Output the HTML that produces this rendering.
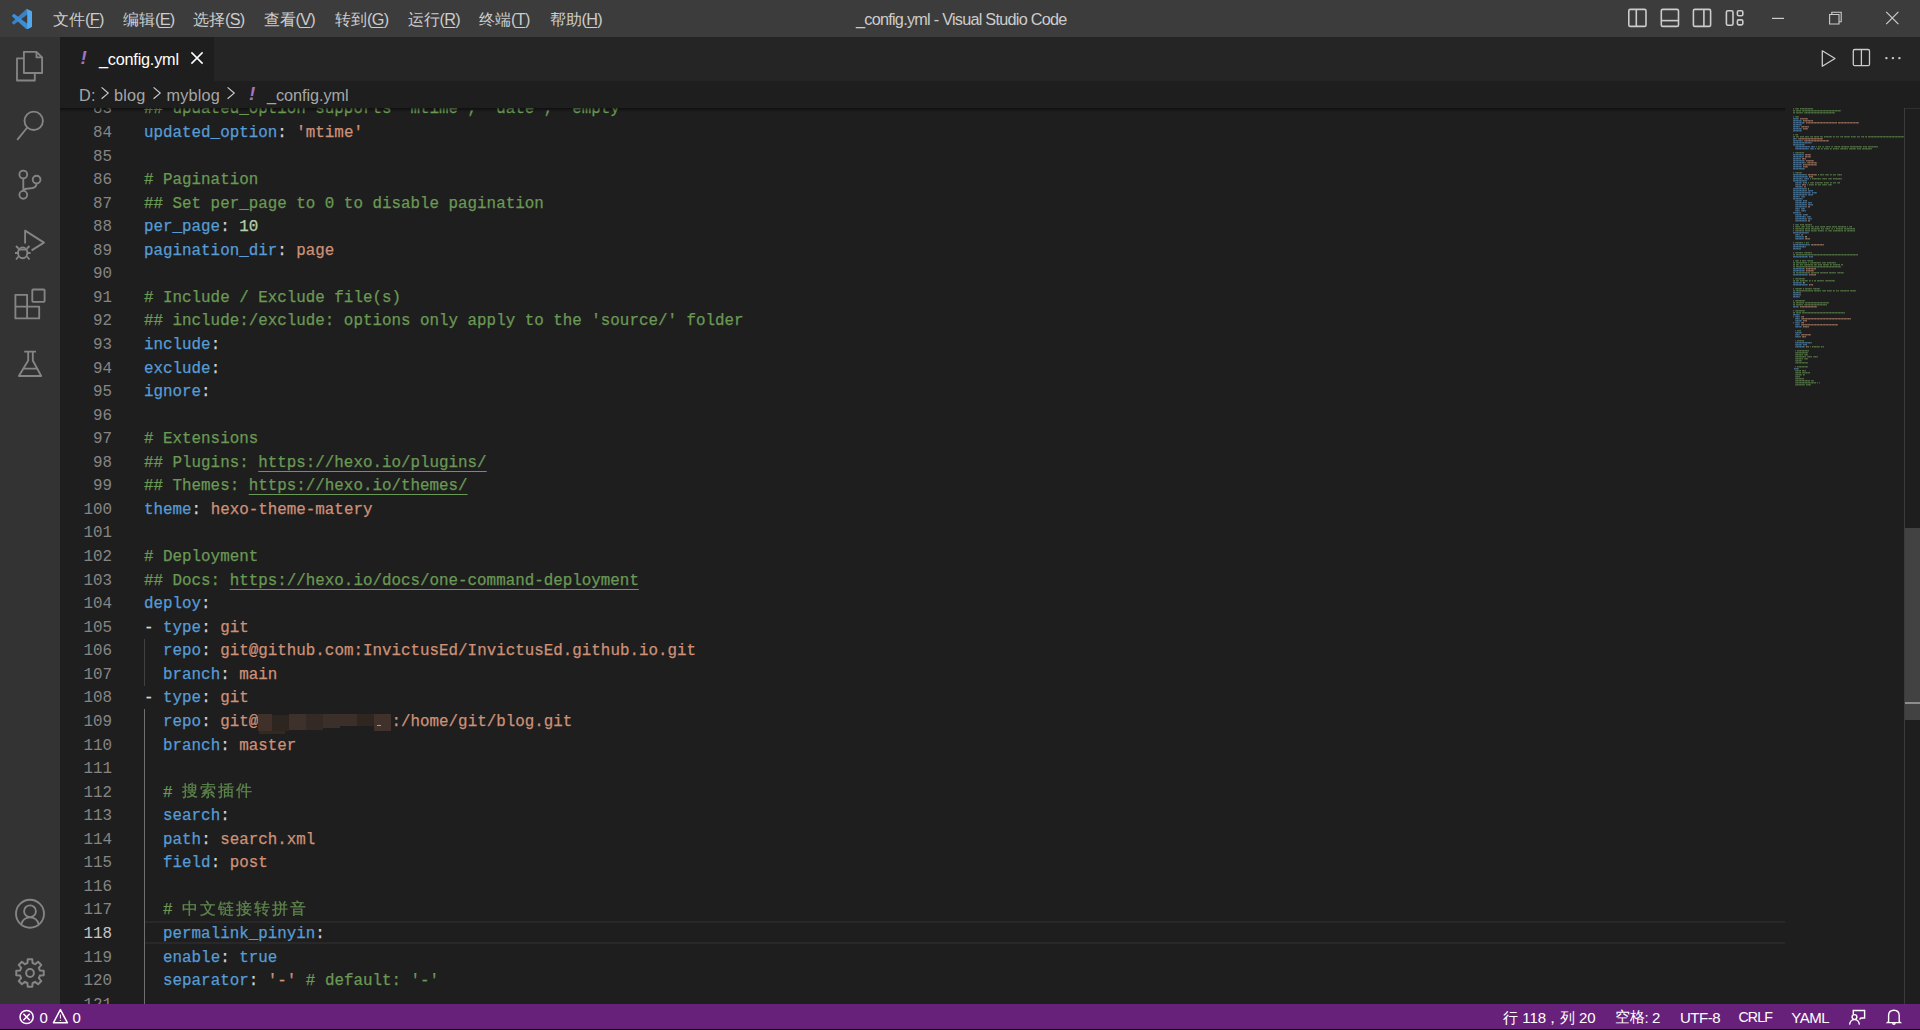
<!DOCTYPE html>
<html><head><meta charset="utf-8"><title>_config.yml - Visual Studio Code</title>
<style>
*{box-sizing:border-box}
html,body{margin:0;padding:0;width:1920px;height:1030px;overflow:hidden;background:#000}
body{position:relative;font-family:"Liberation Sans",sans-serif}
.abs{position:absolute}
#titlebar{position:absolute;left:0;top:0;width:1920px;height:37px;background:#3c3c3c}
.menu{position:absolute;top:8px;height:22px;line-height:22px;font-size:16.25px;color:#cccccc;white-space:nowrap}
#title{position:absolute;top:8px;left:856px;height:22px;line-height:22px;font-size:16.25px;color:#cccccc;white-space:nowrap;letter-spacing:-0.75px}
#activity{position:absolute;left:0;top:37px;width:60px;height:967px;background:#333333}
#tabs{position:absolute;left:60px;top:37px;width:1860px;height:44px;background:#252526}
#tab{position:absolute;left:60px;top:37px;width:154px;height:44px;background:#1e1e1e}
#crumbs{position:absolute;left:60px;top:81px;width:1860px;height:27px;background:#1e1e1e}
#editor{position:absolute;left:60px;top:108px;width:1860px;height:896px;background:#1e1e1e;overflow:hidden}
#status{position:absolute;left:0;top:1004px;width:1920px;height:25px;background:#68217a;color:#fff}
.ln{position:absolute;left:0;width:52px;text-align:right;font-family:"Liberation Mono",monospace;font-size:15.865px;line-height:23.56px;height:23.56px;color:#858585;white-space:pre}
.ln.act{color:#c6c6c6}
.cl{position:absolute;left:84px;font-family:"Liberation Mono",monospace;font-size:15.865px;line-height:23.56px;height:23.56px;white-space:pre;-webkit-text-stroke:0.25px currentColor}
.u{text-decoration:underline;text-underline-offset:4px;text-decoration-thickness:1px;text-decoration-skip-ink:none}
.cjk{font-size:15.5px;letter-spacing:2px;font-weight:200;opacity:0.85;position:relative;top:-0.5px}
.st{position:absolute;top:1005px;height:25px;line-height:25px;font-size:15px;color:#fff;white-space:nowrap}
</style></head><body>

<div id="titlebar"></div>

<svg style="position:absolute;left:11.8px;top:8.8px" width="20.3" height="20.3" viewBox="0 0 100 100">
  <path fill="#3a82c2" d="M96.46 10.8 75.86.87C73.48-.28 70.62.2 68.75 2.07L1.3 63.57c-1.81 1.65-1.81 4.5.01 6.15l5.51 5.01c1.49 1.35 3.72 1.45 5.32.23L93.4 13.36c2.72-2.07 6.64-.13 6.64 3.3v-.24c0-2.41-1.38-4.6-3.55-5.62z"/>
  <path fill="#3b8ed6" d="m96.46 89.2-20.6 9.93c-2.38 1.15-5.24.66-7.11-1.21L1.3 36.43c-1.81-1.65-1.81-4.5.01-6.15l5.51-5.01c1.49-1.35 3.72-1.45 5.32-.23L93.4 86.64c2.72 2.07 6.64.13 6.64-3.3v.24c0 2.41-1.38 4.6-3.55 5.62z"/>
  <path fill="#52a8ee" d="M75.86 99.13c-2.38 1.15-5.24.66-7.11-1.21 2.31 2.31 6.25.67 6.25-2.59V4.67c0-3.26-3.94-4.9-6.25-2.59 1.87-1.87 4.73-2.36 7.11-1.21l20.6 9.92c2.17 1.04 3.55 3.24 3.55 5.65v67.12c0 2.41-1.38 4.6-3.55 5.65z"/>
</svg>
<div class="menu" style="left:53px"><span style="font-weight:300">文件</span><span style="letter-spacing:-0.7px">(<span style="text-decoration:underline;text-underline-offset:2px;text-decoration-thickness:1px">F</span>)</span></div>
<div class="menu" style="left:123px"><span style="font-weight:300">编辑</span><span style="letter-spacing:-0.7px">(<span style="text-decoration:underline;text-underline-offset:2px;text-decoration-thickness:1px">E</span>)</span></div>
<div class="menu" style="left:193px"><span style="font-weight:300">选择</span><span style="letter-spacing:-0.7px">(<span style="text-decoration:underline;text-underline-offset:2px;text-decoration-thickness:1px">S</span>)</span></div>
<div class="menu" style="left:263.5px"><span style="font-weight:300">查看</span><span style="letter-spacing:-0.7px">(<span style="text-decoration:underline;text-underline-offset:2px;text-decoration-thickness:1px">V</span>)</span></div>
<div class="menu" style="left:335px"><span style="font-weight:300">转到</span><span style="letter-spacing:-0.7px">(<span style="text-decoration:underline;text-underline-offset:2px;text-decoration-thickness:1px">G</span>)</span></div>
<div class="menu" style="left:407.5px"><span style="font-weight:300">运行</span><span style="letter-spacing:-0.7px">(<span style="text-decoration:underline;text-underline-offset:2px;text-decoration-thickness:1px">R</span>)</span></div>
<div class="menu" style="left:479px"><span style="font-weight:300">终端</span><span style="letter-spacing:-0.7px">(<span style="text-decoration:underline;text-underline-offset:2px;text-decoration-thickness:1px">T</span>)</span></div>
<div class="menu" style="left:549.5px"><span style="font-weight:300">帮助</span><span style="letter-spacing:-0.7px">(<span style="text-decoration:underline;text-underline-offset:2px;text-decoration-thickness:1px">H</span>)</span></div>
<div id="title">_config.yml - Visual Studio Code</div>

<svg style="position:absolute;left:0;top:0" width="1920" height="37" fill="none" stroke="#cccccc" stroke-width="1.6">
  <rect x="1628.8" y="9.4" width="17.2" height="17" rx="1.5"/>
  <path d="M1636.3 9.4 V26.4"/>
  <rect x="1661.3" y="9.4" width="17.2" height="17" rx="1.5"/>
  <path d="M1661.3 20.6 H1678.5"/>
  <rect x="1693.4" y="9.4" width="17.2" height="17" rx="1.5"/>
  <path d="M1703.9 9.4 V26.4"/>
  <rect x="1726.4" y="10.7" width="6.6" height="14.5" rx="1.5"/>
  <rect x="1737.4" y="10.8" width="5.4" height="5" rx="1.3"/>
  <rect x="1737.4" y="19.9" width="5.4" height="5" rx="1.3"/>
  <path d="M1772 18.4 H1784" stroke-width="1.2"/>
  <path d="M1829.6 14.5 H1839 V24 H1829.6 Z M1831.8 14.5 V12.3 H1841.2 V21.8 H1839" stroke-width="1.1"/>
  <path d="M1886.2 11.8 L1898.4 24.2 M1898.4 11.8 L1886.2 24.2" stroke-width="1.2"/>
</svg>
<div id="activity"></div>

<svg style="position:absolute;left:0;top:37px" width="60" height="967" fill="none" stroke="#858585" stroke-width="1.85" stroke-linejoin="round">
  <!-- explorer -->
  <path d="M23.9 51.8 H36.5 L42.1 57.4 V73 H23.9 Z M36.5 51.8 V57.4 H42.1" transform="translate(0,-37)"/>
  <path d="M23.9 58.4 H17 V80.5 H34.8 V73" transform="translate(0,-37)"/>
  <!-- search -->
  <circle cx="33.7" cy="83.8" r="9.2"/>
  <path d="M27.3 90.5 L17.2 102.8"/>
  <!-- scm -->
  <circle cx="23.3" cy="137.5" r="3.9"/>
  <circle cx="36.6" cy="142.6" r="3.9"/>
  <circle cx="23.3" cy="157.8" r="3.9"/>
  <path d="M23.3 141.4 V153.9 M36.6 146.5 C36.6 150.5 34 151.5 29 151.5 C25 151.5 23.3 153 23.3 153.9"/>
  <!-- run debug -->
  <path d="M25.1 206.5 V193.6 L44 205.6 L31.6 213.4"/>
  <ellipse cx="22.7" cy="215.8" rx="4.6" ry="5.4"/>
  <path d="M18 212.5 H27.4 M16 209 L18.5 211.5 M29.5 209 L27 211.5 M15 216 H18 M27.4 216 H30.5 M16 222.5 L18.5 219.5 M29.5 222.5 L27 219.5"/>
  <!-- extensions -->
  <path d="M15.4 257.8 H27.1 V281.4 H15.4 Z M15.4 269.6 H39.2 V281.4 H27.1"/>
  <rect x="32.3" y="252.5" width="12.3" height="12.3" rx="0.8"/>
  <!-- testing beaker -->
  <path d="M24.2 314.6 H36 M28.2 314.6 V323.5 L18.9 339 H41.2 L32.8 323.5 V314.6 M22.5 331.6 H37.6"/>
  <!-- account -->
  <circle cx="30" cy="876.7" r="14"/>
  <circle cx="30" cy="874.2" r="5.9"/>
  <path d="M21.4 887.2 C22.6 882.4 26 880.4 30 880.4 C34 880.4 37.4 882.4 38.6 887.2"/>
</svg>
<svg style="position:absolute;left:15px;top:957.5px" width="30" height="30" viewBox="0 0 30 30" fill="none" stroke="#858585" stroke-width="2" stroke-linejoin="round">
  <path d="M12.39 5.14 L12.72 1.29 L17.28 1.29 L17.61 5.14 A10.2 10.2 0 0 1 20.12 6.18 L20.12 6.18 L23.08 3.69 L26.31 6.92 L23.82 9.88 A10.2 10.2 0 0 1 24.86 12.39 L24.86 12.39 L28.71 12.72 L28.71 17.28 L24.86 17.61 A10.2 10.2 0 0 1 23.82 20.12 L23.82 20.12 L26.31 23.08 L23.08 26.31 L20.12 23.82 A10.2 10.2 0 0 1 17.61 24.86 L17.61 24.86 L17.28 28.71 L12.72 28.71 L12.39 24.86 A10.2 10.2 0 0 1 9.88 23.82 L9.88 23.82 L6.92 26.31 L3.69 23.08 L6.18 20.12 A10.2 10.2 0 0 1 5.14 17.61 L5.14 17.61 L1.29 17.28 L1.29 12.72 L5.14 12.39 A10.2 10.2 0 0 1 6.18 9.88 L6.18 9.88 L3.69 6.92 L6.92 3.69 L9.88 6.18 A10.2 10.2 0 0 1 12.39 5.14 Z"/>
  <circle cx="15" cy="15" r="3.9"/>
</svg>

<div id="tabs"></div><div id="tab"></div>
<div class="abs" style="left:80.5px;top:47.5px;font:italic bold 19px 'Liberation Sans';color:#a074c4;line-height:20px">!</div>
<div class="abs" style="left:99px;top:47.5px;font-size:16.25px;color:#ffffff;line-height:22px;white-space:nowrap;letter-spacing:-0.22px">_config.yml</div>
<svg class="abs" style="left:190px;top:51px" width="14" height="14"><path d="M1.4 1.4 L12.6 12.6 M12.6 1.4 L1.4 12.6" stroke="#ffffff" stroke-width="1.5"/></svg>
<svg class="abs" style="left:0;top:37px" width="1920" height="44" fill="none" stroke="#cccccc" stroke-width="1.3">
 <path d="M1822.3 13.8 L1835 21.5 L1822.3 29.2 Z" stroke-linejoin="round"/>
 <rect x="1853.3" y="12.5" width="16.2" height="16.2" rx="1.5"/>
 <path d="M1861.4 12.5 V28.7"/>
 <circle cx="1886.4" cy="21.1" r="1.2" fill="#cccccc" stroke="none"/>
 <circle cx="1892.9" cy="21.1" r="1.2" fill="#cccccc" stroke="none"/>
 <circle cx="1899.4" cy="21.1" r="1.2" fill="#cccccc" stroke="none"/>
</svg>
<div id="crumbs"></div>
<div class="abs" style="left:79px;top:84px;color:rgba(204,204,204,0.8);font-size:16.25px;line-height:22px;white-space:nowrap;letter-spacing:0.2px">D:</div>
<div class="abs" style="left:114px;top:84px;color:rgba(204,204,204,0.8);font-size:16.25px;line-height:22px;white-space:nowrap;letter-spacing:0.2px">blog</div>
<div class="abs" style="left:166.5px;top:84px;color:rgba(204,204,204,0.8);font-size:16.25px;line-height:22px;white-space:nowrap;letter-spacing:0.2px">myblog</div>
<div class="abs" style="left:249px;top:84px;font:italic bold 19px 'Liberation Sans';color:#a074c4;line-height:20px">!</div>
<div class="abs" style="left:267px;top:84px;color:rgba(204,204,204,0.8);font-size:16.25px;line-height:22px;white-space:nowrap;letter-spacing:0.2px;letter-spacing:-0.05px">_config.yml</div>
<svg class="abs" style="left:0;top:0" width="400" height="110" fill="none" stroke="#cccccc" stroke-width="1.2"><path d="M101.6 87.4 L108.2 93.1 L101.6 98.8" /><path d="M153.6 87.4 L160.2 93.1 L153.6 98.8" /><path d="M227.6 87.4 L234.2 93.1 L227.6 98.8" /></svg>
<div id="editor">
<div class="abs" style="left:84px;top:813px;width:1641px;height:23px;border-top:2px solid #282828;border-bottom:2px solid #282828"></div>
<div class="abs" style="left:84px;top:530.78px;width:1px;height:47.12px;background:#404040"></div>
<div class="abs" style="left:84px;top:601.46px;width:1px;height:294.54px;background:#707070"></div>
<div class="ln" style="top:-9.60px">83</div>
<div class="cl" style="top:-9.60px"><span style="color:#6a9955">## updated_option supports &#x27;mtime&#x27;, &#x27;date&#x27;, &#x27;empty&#x27;</span></div>
<div class="ln" style="top:13.96px">84</div>
<div class="cl" style="top:13.96px"><span style="color:#569cd6">updated_option</span><span style="color:#d4d4d4">: </span><span style="color:#ce9178">&#x27;mtime&#x27;</span></div>
<div class="ln" style="top:37.52px">85</div>
<div class="cl" style="top:37.52px"></div>
<div class="ln" style="top:61.08px">86</div>
<div class="cl" style="top:61.08px"><span style="color:#6a9955"># Pagination</span></div>
<div class="ln" style="top:84.64px">87</div>
<div class="cl" style="top:84.64px"><span style="color:#6a9955">## Set per_page to 0 to disable pagination</span></div>
<div class="ln" style="top:108.20px">88</div>
<div class="cl" style="top:108.20px"><span style="color:#569cd6">per_page</span><span style="color:#d4d4d4">: </span><span style="color:#b5cea8">10</span></div>
<div class="ln" style="top:131.76px">89</div>
<div class="cl" style="top:131.76px"><span style="color:#569cd6">pagination_dir</span><span style="color:#d4d4d4">: </span><span style="color:#ce9178">page</span></div>
<div class="ln" style="top:155.32px">90</div>
<div class="cl" style="top:155.32px"></div>
<div class="ln" style="top:178.88px">91</div>
<div class="cl" style="top:178.88px"><span style="color:#6a9955"># Include / Exclude file(s)</span></div>
<div class="ln" style="top:202.44px">92</div>
<div class="cl" style="top:202.44px"><span style="color:#6a9955">## include:/exclude: options only apply to the &#x27;source/&#x27; folder</span></div>
<div class="ln" style="top:226.00px">93</div>
<div class="cl" style="top:226.00px"><span style="color:#569cd6">include</span><span style="color:#d4d4d4">:</span></div>
<div class="ln" style="top:249.56px">94</div>
<div class="cl" style="top:249.56px"><span style="color:#569cd6">exclude</span><span style="color:#d4d4d4">:</span></div>
<div class="ln" style="top:273.12px">95</div>
<div class="cl" style="top:273.12px"><span style="color:#569cd6">ignore</span><span style="color:#d4d4d4">:</span></div>
<div class="ln" style="top:296.68px">96</div>
<div class="cl" style="top:296.68px"></div>
<div class="ln" style="top:320.24px">97</div>
<div class="cl" style="top:320.24px"><span style="color:#6a9955"># Extensions</span></div>
<div class="ln" style="top:343.80px">98</div>
<div class="cl" style="top:343.80px"><span style="color:#6a9955">## Plugins: </span><span style="color:#6a9955" class="u">https://hexo.io/plugins/</span></div>
<div class="ln" style="top:367.36px">99</div>
<div class="cl" style="top:367.36px"><span style="color:#6a9955">## Themes: </span><span style="color:#6a9955" class="u">https://hexo.io/themes/</span></div>
<div class="ln" style="top:390.92px">100</div>
<div class="cl" style="top:390.92px"><span style="color:#569cd6">theme</span><span style="color:#d4d4d4">: </span><span style="color:#ce9178">hexo-theme-matery</span></div>
<div class="ln" style="top:414.48px">101</div>
<div class="cl" style="top:414.48px"></div>
<div class="ln" style="top:438.04px">102</div>
<div class="cl" style="top:438.04px"><span style="color:#6a9955"># Deployment</span></div>
<div class="ln" style="top:461.60px">103</div>
<div class="cl" style="top:461.60px"><span style="color:#6a9955">## Docs: </span><span style="color:#6a9955" class="u">https://hexo.io/docs/one-command-deployment</span></div>
<div class="ln" style="top:485.16px">104</div>
<div class="cl" style="top:485.16px"><span style="color:#569cd6">deploy</span><span style="color:#d4d4d4">:</span></div>
<div class="ln" style="top:508.72px">105</div>
<div class="cl" style="top:508.72px"><span style="color:#d4d4d4">- </span><span style="color:#569cd6">type</span><span style="color:#d4d4d4">: </span><span style="color:#ce9178">git</span></div>
<div class="ln" style="top:532.28px">106</div>
<div class="cl" style="top:532.28px"><span style="color:#d4d4d4">  </span><span style="color:#569cd6">repo</span><span style="color:#d4d4d4">: </span><span style="color:#ce9178">git@github.com:InvictusEd/InvictusEd.github.io.git</span></div>
<div class="ln" style="top:555.84px">107</div>
<div class="cl" style="top:555.84px"><span style="color:#d4d4d4">  </span><span style="color:#569cd6">branch</span><span style="color:#d4d4d4">: </span><span style="color:#ce9178">main</span></div>
<div class="ln" style="top:579.40px">108</div>
<div class="cl" style="top:579.40px"><span style="color:#d4d4d4">- </span><span style="color:#569cd6">type</span><span style="color:#d4d4d4">: </span><span style="color:#ce9178">git</span></div>
<div class="ln" style="top:602.96px">109</div>
<div class="cl" style="top:602.96px"><span style="color:#d4d4d4">  </span><span style="color:#569cd6">repo</span><span style="color:#d4d4d4">: </span><span style="color:#ce9178">git@</span><span style="color:#ce9178">              </span><span style="color:#ce9178">:/home/git/blog.git</span></div>
<div class="ln" style="top:626.52px">110</div>
<div class="cl" style="top:626.52px"><span style="color:#d4d4d4">  </span><span style="color:#569cd6">branch</span><span style="color:#d4d4d4">: </span><span style="color:#ce9178">master</span></div>
<div class="ln" style="top:650.08px">111</div>
<div class="cl" style="top:650.08px"></div>
<div class="ln" style="top:673.64px">112</div>
<div class="cl" style="top:673.64px"><span style="color:#d4d4d4">  </span><span style="color:#6a9955"># </span><span style="color:#6a9955" class="cjk">搜索插件</span></div>
<div class="ln" style="top:697.20px">113</div>
<div class="cl" style="top:697.20px"><span style="color:#d4d4d4">  </span><span style="color:#569cd6">search</span><span style="color:#d4d4d4">:</span></div>
<div class="ln" style="top:720.76px">114</div>
<div class="cl" style="top:720.76px"><span style="color:#d4d4d4">  </span><span style="color:#569cd6">path</span><span style="color:#d4d4d4">: </span><span style="color:#ce9178">search.xml</span></div>
<div class="ln" style="top:744.32px">115</div>
<div class="cl" style="top:744.32px"><span style="color:#d4d4d4">  </span><span style="color:#569cd6">field</span><span style="color:#d4d4d4">: </span><span style="color:#ce9178">post</span></div>
<div class="ln" style="top:767.88px">116</div>
<div class="cl" style="top:767.88px"></div>
<div class="ln" style="top:791.44px">117</div>
<div class="cl" style="top:791.44px"><span style="color:#d4d4d4">  </span><span style="color:#6a9955"># </span><span style="color:#6a9955" class="cjk">中文链接转拼音</span></div>
<div class="ln act" style="top:815.00px">118</div>
<div class="cl" style="top:815.00px"><span style="color:#d4d4d4">  </span><span style="color:#569cd6">permalink_pinyin</span><span style="color:#d4d4d4">:</span></div>
<div class="ln" style="top:838.56px">119</div>
<div class="cl" style="top:838.56px"><span style="color:#d4d4d4">  </span><span style="color:#569cd6">enable</span><span style="color:#d4d4d4">: </span><span style="color:#569cd6">true</span></div>
<div class="ln" style="top:862.12px">120</div>
<div class="cl" style="top:862.12px"><span style="color:#d4d4d4">  </span><span style="color:#569cd6">separator</span><span style="color:#d4d4d4">: </span><span style="color:#ce9178">&#x27;-&#x27;</span><span style="color:#d4d4d4"> </span><span style="color:#6a9955"># default: &#x27;-&#x27;</span></div>
<div class="ln" style="top:885.68px">121</div>
<div class="cl" style="top:885.68px"></div>
<div class="abs" style="left:198px;top:606px;width:14px;height:17px;background:#3f3029"></div>
<div class="abs" style="left:198.7px;top:623px;width:26px;height:2.5px;background:#33291f"></div>
<div class="abs" style="left:212px;top:607px;width:17px;height:16px;background:#2d2520"></div>
<div class="abs" style="left:229px;top:606px;width:17px;height:16px;background:#3e302a"></div>
<div class="abs" style="left:246px;top:606px;width:17px;height:15.5px;background:#342a25"></div>
<div class="abs" style="left:263px;top:606px;width:17px;height:14px;background:#3b2f29"></div>
<div class="abs" style="left:280px;top:606px;width:17px;height:11.8px;background:#3c2f29"></div>
<div class="abs" style="left:297px;top:606px;width:17px;height:11.8px;background:#2f2622"></div>
<div class="abs" style="left:314px;top:606px;width:17px;height:17px;background:#40322b"></div>
<div class="abs" style="left:316.5px;top:617px;width:4.5px;height:1.3px;background:#c59077"></div>
<div class="abs" style="left:0;top:0;width:1725px;height:4px;background:linear-gradient(rgba(0,0,0,0.5),rgba(0,0,0,0))"></div>
</div>
<svg class="mm" width="1920" height="1030" style="position:absolute;left:0;top:0"><defs><pattern id="mmp" x="0" y="108" width="3" height="2" patternUnits="userSpaceOnUse"><rect x="0" y="0" width="3" height="2" fill="#000"/><rect x="0" y="0" width="1" height="1.5" fill="#fff"/><rect x="1" y="0" width="1" height="1.5" fill="#b0b0b0"/><rect x="2" y="0" width="1" height="1.5" fill="#d8d8d8"/></pattern><mask id="mmm" maskUnits="userSpaceOnUse" x="1785" y="100" width="120" height="300"><rect x="1785" y="100" width="120" height="300" fill="url(#mmp)"/></mask></defs><g opacity="0.62" mask="url(#mmm)"><rect x="1793" y="108.0" width="1" height="2" fill="#6a9955"/><rect x="1795" y="108.0" width="4" height="2" fill="#6a9955"/><rect x="1800" y="108.0" width="13" height="2" fill="#6a9955"/><rect x="1793" y="110.0" width="2" height="2" fill="#6a9955"/><rect x="1796" y="110.0" width="5" height="2" fill="#6a9955"/><rect x="1802" y="110.0" width="39" height="2" fill="#6a9955"/><rect x="1793" y="112.0" width="2" height="2" fill="#6a9955"/><rect x="1796" y="112.0" width="7" height="2" fill="#6a9955"/><rect x="1804" y="112.0" width="31" height="2" fill="#6a9955"/><rect x="1793" y="116.0" width="1" height="2" fill="#6a9955"/><rect x="1795" y="116.0" width="4" height="2" fill="#6a9955"/><rect x="1793" y="118.0" width="5" height="2" fill="#569cd6"/><rect x="1798" y="118.0" width="1" height="2" fill="#777"/><rect x="1800" y="118.0" width="8" height="2" fill="#ce9178"/><rect x="1793" y="120.0" width="8" height="2" fill="#569cd6"/><rect x="1801" y="120.0" width="1" height="2" fill="#777"/><rect x="1803" y="120.0" width="10" height="2" fill="#ce9178"/><rect x="1793" y="122.0" width="11" height="2" fill="#569cd6"/><rect x="1804" y="122.0" width="1" height="2" fill="#777"/><rect x="1806" y="122.0" width="31" height="2" fill="#ce9178"/><rect x="1838" y="122.0" width="21" height="2" fill="#ce9178"/><rect x="1793" y="124.0" width="8" height="2" fill="#569cd6"/><rect x="1801" y="124.0" width="1" height="2" fill="#777"/><rect x="1793" y="126.0" width="6" height="2" fill="#569cd6"/><rect x="1799" y="126.0" width="1" height="2" fill="#777"/><rect x="1801" y="126.0" width="8" height="2" fill="#ce9178"/><rect x="1793" y="128.0" width="8" height="2" fill="#569cd6"/><rect x="1801" y="128.0" width="1" height="2" fill="#777"/><rect x="1803" y="128.0" width="5" height="2" fill="#ce9178"/><rect x="1793" y="130.0" width="8" height="2" fill="#569cd6"/><rect x="1801" y="130.0" width="1" height="2" fill="#777"/><rect x="1793" y="134.0" width="1" height="2" fill="#6a9955"/><rect x="1795" y="134.0" width="3" height="2" fill="#6a9955"/><rect x="1793" y="136.0" width="2" height="2" fill="#6a9955"/><rect x="1796" y="136.0" width="3" height="2" fill="#6a9955"/><rect x="1800" y="136.0" width="4" height="2" fill="#6a9955"/><rect x="1805" y="136.0" width="4" height="2" fill="#6a9955"/><rect x="1810" y="136.0" width="3" height="2" fill="#6a9955"/><rect x="1814" y="136.0" width="5" height="2" fill="#6a9955"/><rect x="1820" y="136.0" width="3" height="2" fill="#6a9955"/><rect x="1824" y="136.0" width="8" height="2" fill="#6a9955"/><rect x="1833" y="136.0" width="2" height="2" fill="#6a9955"/><rect x="1836" y="136.0" width="3" height="2" fill="#6a9955"/><rect x="1840" y="136.0" width="3" height="2" fill="#6a9955"/><rect x="1844" y="136.0" width="6" height="2" fill="#6a9955"/><rect x="1851" y="136.0" width="5" height="2" fill="#6a9955"/><rect x="1857" y="136.0" width="3" height="2" fill="#6a9955"/><rect x="1861" y="136.0" width="3" height="2" fill="#6a9955"/><rect x="1865" y="136.0" width="2" height="2" fill="#6a9955"/><rect x="1868" y="136.0" width="36" height="2" fill="#6a9955"/><rect x="1793" y="138.0" width="3" height="2" fill="#569cd6"/><rect x="1796" y="138.0" width="1" height="2" fill="#777"/><rect x="1798" y="138.0" width="25" height="2" fill="#ce9178"/><rect x="1793" y="140.0" width="9" height="2" fill="#569cd6"/><rect x="1802" y="140.0" width="1" height="2" fill="#777"/><rect x="1804" y="140.0" width="25" height="2" fill="#ce9178"/><rect x="1793" y="142.0" width="18" height="2" fill="#569cd6"/><rect x="1811" y="142.0" width="1" height="2" fill="#777"/><rect x="1793" y="144.0" width="11" height="2" fill="#569cd6"/><rect x="1804" y="144.0" width="1" height="2" fill="#777"/><rect x="1795" y="146.0" width="14" height="2" fill="#569cd6"/><rect x="1809" y="146.0" width="1" height="2" fill="#777"/><rect x="1811" y="146.0" width="4" height="2" fill="#569cd6"/><rect x="1816" y="146.0" width="1" height="2" fill="#6a9955"/><rect x="1818" y="146.0" width="3" height="2" fill="#6a9955"/><rect x="1822" y="146.0" width="2" height="2" fill="#6a9955"/><rect x="1825" y="146.0" width="5" height="2" fill="#6a9955"/><rect x="1831" y="146.0" width="2" height="2" fill="#6a9955"/><rect x="1834" y="146.0" width="6" height="2" fill="#6a9955"/><rect x="1841" y="146.0" width="8" height="2" fill="#6a9955"/><rect x="1850" y="146.0" width="12" height="2" fill="#6a9955"/><rect x="1863" y="146.0" width="4" height="2" fill="#6a9955"/><rect x="1868" y="146.0" width="10" height="2" fill="#6a9955"/><rect x="1795" y="148.0" width="13" height="2" fill="#569cd6"/><rect x="1808" y="148.0" width="1" height="2" fill="#777"/><rect x="1810" y="148.0" width="4" height="2" fill="#569cd6"/><rect x="1815" y="148.0" width="1" height="2" fill="#6a9955"/><rect x="1817" y="148.0" width="3" height="2" fill="#6a9955"/><rect x="1821" y="148.0" width="2" height="2" fill="#6a9955"/><rect x="1824" y="148.0" width="5" height="2" fill="#6a9955"/><rect x="1830" y="148.0" width="2" height="2" fill="#6a9955"/><rect x="1833" y="148.0" width="6" height="2" fill="#6a9955"/><rect x="1840" y="148.0" width="8" height="2" fill="#6a9955"/><rect x="1849" y="148.0" width="7" height="2" fill="#6a9955"/><rect x="1857" y="148.0" width="4" height="2" fill="#6a9955"/><rect x="1862" y="148.0" width="10" height="2" fill="#6a9955"/><rect x="1793" y="152.0" width="1" height="2" fill="#6a9955"/><rect x="1795" y="152.0" width="9" height="2" fill="#6a9955"/><rect x="1793" y="154.0" width="10" height="2" fill="#569cd6"/><rect x="1803" y="154.0" width="1" height="2" fill="#777"/><rect x="1805" y="154.0" width="6" height="2" fill="#ce9178"/><rect x="1793" y="156.0" width="10" height="2" fill="#569cd6"/><rect x="1803" y="156.0" width="1" height="2" fill="#777"/><rect x="1805" y="156.0" width="6" height="2" fill="#ce9178"/><rect x="1793" y="158.0" width="7" height="2" fill="#569cd6"/><rect x="1800" y="158.0" width="1" height="2" fill="#777"/><rect x="1802" y="158.0" width="4" height="2" fill="#ce9178"/><rect x="1793" y="160.0" width="11" height="2" fill="#569cd6"/><rect x="1804" y="160.0" width="1" height="2" fill="#777"/><rect x="1806" y="160.0" width="8" height="2" fill="#ce9178"/><rect x="1793" y="162.0" width="12" height="2" fill="#569cd6"/><rect x="1805" y="162.0" width="1" height="2" fill="#777"/><rect x="1807" y="162.0" width="10" height="2" fill="#ce9178"/><rect x="1793" y="164.0" width="8" height="2" fill="#569cd6"/><rect x="1801" y="164.0" width="1" height="2" fill="#777"/><rect x="1803" y="164.0" width="14" height="2" fill="#ce9178"/><rect x="1793" y="166.0" width="8" height="2" fill="#569cd6"/><rect x="1801" y="166.0" width="1" height="2" fill="#777"/><rect x="1803" y="166.0" width="5" height="2" fill="#ce9178"/><rect x="1793" y="168.0" width="11" height="2" fill="#569cd6"/><rect x="1804" y="168.0" width="1" height="2" fill="#777"/><rect x="1793" y="172.0" width="1" height="2" fill="#6a9955"/><rect x="1795" y="172.0" width="7" height="2" fill="#6a9955"/><rect x="1793" y="174.0" width="13" height="2" fill="#569cd6"/><rect x="1806" y="174.0" width="1" height="2" fill="#777"/><rect x="1808" y="174.0" width="9" height="2" fill="#ce9178"/><rect x="1818" y="174.0" width="1" height="2" fill="#6a9955"/><rect x="1820" y="174.0" width="4" height="2" fill="#6a9955"/><rect x="1825" y="174.0" width="4" height="2" fill="#6a9955"/><rect x="1830" y="174.0" width="2" height="2" fill="#6a9955"/><rect x="1833" y="174.0" width="3" height="2" fill="#6a9955"/><rect x="1837" y="174.0" width="5" height="2" fill="#6a9955"/><rect x="1793" y="176.0" width="14" height="2" fill="#569cd6"/><rect x="1807" y="176.0" width="1" height="2" fill="#777"/><rect x="1809" y="176.0" width="4" height="2" fill="#ce9178"/><rect x="1793" y="178.0" width="9" height="2" fill="#569cd6"/><rect x="1802" y="178.0" width="1" height="2" fill="#777"/><rect x="1804" y="178.0" width="5" height="2" fill="#569cd6"/><rect x="1810" y="178.0" width="1" height="2" fill="#6a9955"/><rect x="1812" y="178.0" width="9" height="2" fill="#6a9955"/><rect x="1822" y="178.0" width="5" height="2" fill="#6a9955"/><rect x="1828" y="178.0" width="4" height="2" fill="#6a9955"/><rect x="1833" y="178.0" width="9" height="2" fill="#6a9955"/><rect x="1793" y="180.0" width="13" height="2" fill="#569cd6"/><rect x="1806" y="180.0" width="1" height="2" fill="#777"/><rect x="1795" y="182.0" width="6" height="2" fill="#569cd6"/><rect x="1801" y="182.0" width="1" height="2" fill="#777"/><rect x="1803" y="182.0" width="4" height="2" fill="#569cd6"/><rect x="1808" y="182.0" width="1" height="2" fill="#6a9955"/><rect x="1810" y="182.0" width="4" height="2" fill="#6a9955"/><rect x="1815" y="182.0" width="8" height="2" fill="#6a9955"/><rect x="1824" y="182.0" width="5" height="2" fill="#6a9955"/><rect x="1830" y="182.0" width="2" height="2" fill="#6a9955"/><rect x="1833" y="182.0" width="3" height="2" fill="#6a9955"/><rect x="1837" y="182.0" width="3" height="2" fill="#6a9955"/><rect x="1795" y="184.0" width="5" height="2" fill="#569cd6"/><rect x="1800" y="184.0" width="1" height="2" fill="#777"/><rect x="1802" y="184.0" width="4" height="2" fill="#ce9178"/><rect x="1807" y="184.0" width="1" height="2" fill="#6a9955"/><rect x="1809" y="184.0" width="5" height="2" fill="#6a9955"/><rect x="1815" y="184.0" width="2" height="2" fill="#6a9955"/><rect x="1818" y="184.0" width="3" height="2" fill="#6a9955"/><rect x="1822" y="184.0" width="5" height="2" fill="#6a9955"/><rect x="1828" y="184.0" width="4" height="2" fill="#6a9955"/><rect x="1795" y="186.0" width="7" height="2" fill="#569cd6"/><rect x="1802" y="186.0" width="1" height="2" fill="#777"/><rect x="1804" y="186.0" width="2" height="2" fill="#ce9178"/><rect x="1793" y="188.0" width="13" height="2" fill="#569cd6"/><rect x="1806" y="188.0" width="1" height="2" fill="#777"/><rect x="1808" y="188.0" width="1" height="2" fill="#b5cea8"/><rect x="1793" y="190.0" width="13" height="2" fill="#569cd6"/><rect x="1806" y="190.0" width="1" height="2" fill="#777"/><rect x="1808" y="190.0" width="5" height="2" fill="#569cd6"/><rect x="1793" y="192.0" width="17" height="2" fill="#569cd6"/><rect x="1810" y="192.0" width="1" height="2" fill="#777"/><rect x="1812" y="192.0" width="5" height="2" fill="#569cd6"/><rect x="1793" y="194.0" width="13" height="2" fill="#569cd6"/><rect x="1806" y="194.0" width="1" height="2" fill="#777"/><rect x="1808" y="194.0" width="5" height="2" fill="#569cd6"/><rect x="1793" y="196.0" width="6" height="2" fill="#569cd6"/><rect x="1799" y="196.0" width="1" height="2" fill="#777"/><rect x="1801" y="196.0" width="4" height="2" fill="#569cd6"/><rect x="1793" y="198.0" width="9" height="2" fill="#569cd6"/><rect x="1802" y="198.0" width="1" height="2" fill="#777"/><rect x="1795" y="200.0" width="6" height="2" fill="#569cd6"/><rect x="1801" y="200.0" width="1" height="2" fill="#777"/><rect x="1803" y="200.0" width="4" height="2" fill="#569cd6"/><rect x="1795" y="202.0" width="11" height="2" fill="#569cd6"/><rect x="1806" y="202.0" width="1" height="2" fill="#777"/><rect x="1808" y="202.0" width="4" height="2" fill="#569cd6"/><rect x="1795" y="204.0" width="11" height="2" fill="#569cd6"/><rect x="1806" y="204.0" width="1" height="2" fill="#777"/><rect x="1808" y="204.0" width="5" height="2" fill="#569cd6"/><rect x="1795" y="206.0" width="11" height="2" fill="#569cd6"/><rect x="1806" y="206.0" width="1" height="2" fill="#777"/><rect x="1808" y="206.0" width="2" height="2" fill="#ce9178"/><rect x="1795" y="208.0" width="4" height="2" fill="#569cd6"/><rect x="1799" y="208.0" width="1" height="2" fill="#777"/><rect x="1801" y="208.0" width="4" height="2" fill="#569cd6"/><rect x="1795" y="210.0" width="4" height="2" fill="#569cd6"/><rect x="1799" y="210.0" width="1" height="2" fill="#777"/><rect x="1801" y="210.0" width="5" height="2" fill="#569cd6"/><rect x="1793" y="212.0" width="7" height="2" fill="#569cd6"/><rect x="1800" y="212.0" width="1" height="2" fill="#777"/><rect x="1795" y="214.0" width="6" height="2" fill="#569cd6"/><rect x="1801" y="214.0" width="1" height="2" fill="#777"/><rect x="1803" y="214.0" width="5" height="2" fill="#569cd6"/><rect x="1795" y="216.0" width="10" height="2" fill="#569cd6"/><rect x="1805" y="216.0" width="1" height="2" fill="#777"/><rect x="1807" y="216.0" width="4" height="2" fill="#569cd6"/><rect x="1795" y="218.0" width="11" height="2" fill="#569cd6"/><rect x="1806" y="218.0" width="1" height="2" fill="#777"/><rect x="1808" y="218.0" width="4" height="2" fill="#569cd6"/><rect x="1795" y="220.0" width="11" height="2" fill="#569cd6"/><rect x="1806" y="220.0" width="1" height="2" fill="#777"/><rect x="1808" y="220.0" width="2" height="2" fill="#ce9178"/><rect x="1793" y="224.0" width="1" height="2" fill="#6a9955"/><rect x="1795" y="224.0" width="4" height="2" fill="#6a9955"/><rect x="1800" y="224.0" width="4" height="2" fill="#6a9955"/><rect x="1805" y="224.0" width="7" height="2" fill="#6a9955"/><rect x="1793" y="226.0" width="1" height="2" fill="#6a9955"/><rect x="1795" y="226.0" width="5" height="2" fill="#6a9955"/><rect x="1801" y="226.0" width="4" height="2" fill="#6a9955"/><rect x="1806" y="226.0" width="4" height="2" fill="#6a9955"/><rect x="1811" y="226.0" width="3" height="2" fill="#6a9955"/><rect x="1815" y="226.0" width="4" height="2" fill="#6a9955"/><rect x="1820" y="226.0" width="5" height="2" fill="#6a9955"/><rect x="1826" y="226.0" width="5" height="2" fill="#6a9955"/><rect x="1832" y="226.0" width="5" height="2" fill="#6a9955"/><rect x="1838" y="226.0" width="8" height="2" fill="#6a9955"/><rect x="1847" y="226.0" width="1" height="2" fill="#6a9955"/><rect x="1849" y="226.0" width="3" height="2" fill="#6a9955"/><rect x="1793" y="228.0" width="1" height="2" fill="#6a9955"/><rect x="1795" y="228.0" width="9" height="2" fill="#6a9955"/><rect x="1805" y="228.0" width="5" height="2" fill="#6a9955"/><rect x="1811" y="228.0" width="9" height="2" fill="#6a9955"/><rect x="1821" y="228.0" width="3" height="2" fill="#6a9955"/><rect x="1825" y="228.0" width="5" height="2" fill="#6a9955"/><rect x="1831" y="228.0" width="2" height="2" fill="#6a9955"/><rect x="1834" y="228.0" width="1" height="2" fill="#6a9955"/><rect x="1836" y="228.0" width="7" height="2" fill="#6a9955"/><rect x="1844" y="228.0" width="11" height="2" fill="#6a9955"/><rect x="1793" y="230.0" width="1" height="2" fill="#6a9955"/><rect x="1795" y="230.0" width="9" height="2" fill="#6a9955"/><rect x="1805" y="230.0" width="5" height="2" fill="#6a9955"/><rect x="1811" y="230.0" width="6" height="2" fill="#6a9955"/><rect x="1818" y="230.0" width="6" height="2" fill="#6a9955"/><rect x="1825" y="230.0" width="2" height="2" fill="#6a9955"/><rect x="1828" y="230.0" width="4" height="2" fill="#6a9955"/><rect x="1833" y="230.0" width="10" height="2" fill="#6a9955"/><rect x="1844" y="230.0" width="2" height="2" fill="#6a9955"/><rect x="1847" y="230.0" width="8" height="2" fill="#6a9955"/><rect x="1793" y="232.0" width="15" height="2" fill="#569cd6"/><rect x="1808" y="232.0" width="1" height="2" fill="#777"/><rect x="1795" y="234.0" width="4" height="2" fill="#569cd6"/><rect x="1799" y="234.0" width="1" height="2" fill="#777"/><rect x="1801" y="234.0" width="2" height="2" fill="#ce9178"/><rect x="1795" y="236.0" width="8" height="2" fill="#569cd6"/><rect x="1803" y="236.0" width="1" height="2" fill="#777"/><rect x="1805" y="236.0" width="2" height="2" fill="#b5cea8"/><rect x="1795" y="238.0" width="8" height="2" fill="#569cd6"/><rect x="1803" y="238.0" width="1" height="2" fill="#777"/><rect x="1805" y="238.0" width="5" height="2" fill="#ce9178"/><rect x="1793" y="242.0" width="1" height="2" fill="#6a9955"/><rect x="1795" y="242.0" width="8" height="2" fill="#6a9955"/><rect x="1804" y="242.0" width="1" height="2" fill="#6a9955"/><rect x="1806" y="242.0" width="3" height="2" fill="#6a9955"/><rect x="1793" y="244.0" width="16" height="2" fill="#569cd6"/><rect x="1809" y="244.0" width="1" height="2" fill="#777"/><rect x="1811" y="244.0" width="13" height="2" fill="#ce9178"/><rect x="1793" y="246.0" width="12" height="2" fill="#569cd6"/><rect x="1805" y="246.0" width="1" height="2" fill="#777"/><rect x="1793" y="248.0" width="7" height="2" fill="#569cd6"/><rect x="1800" y="248.0" width="1" height="2" fill="#777"/><rect x="1793" y="252.0" width="1" height="2" fill="#6a9955"/><rect x="1795" y="252.0" width="8" height="2" fill="#6a9955"/><rect x="1804" y="252.0" width="8" height="2" fill="#6a9955"/><rect x="1793" y="254.0" width="2" height="2" fill="#6a9955"/><rect x="1796" y="254.0" width="62" height="2" fill="#6a9955"/><rect x="1793" y="256.0" width="14" height="2" fill="#569cd6"/><rect x="1807" y="256.0" width="1" height="2" fill="#777"/><rect x="1809" y="256.0" width="4" height="2" fill="#569cd6"/><rect x="1793" y="260.0" width="1" height="2" fill="#6a9955"/><rect x="1795" y="260.0" width="4" height="2" fill="#6a9955"/><rect x="1800" y="260.0" width="1" height="2" fill="#6a9955"/><rect x="1802" y="260.0" width="4" height="2" fill="#6a9955"/><rect x="1807" y="260.0" width="6" height="2" fill="#6a9955"/><rect x="1793" y="262.0" width="2" height="2" fill="#6a9955"/><rect x="1796" y="262.0" width="11" height="2" fill="#6a9955"/><rect x="1808" y="262.0" width="1" height="2" fill="#6a9955"/><rect x="1810" y="262.0" width="11" height="2" fill="#6a9955"/><rect x="1822" y="262.0" width="4" height="2" fill="#6a9955"/><rect x="1827" y="262.0" width="9" height="2" fill="#6a9955"/><rect x="1793" y="264.0" width="2" height="2" fill="#6a9955"/><rect x="1796" y="264.0" width="3" height="2" fill="#6a9955"/><rect x="1800" y="264.0" width="3" height="2" fill="#6a9955"/><rect x="1804" y="264.0" width="9" height="2" fill="#6a9955"/><rect x="1814" y="264.0" width="3" height="2" fill="#6a9955"/><rect x="1818" y="264.0" width="4" height="2" fill="#6a9955"/><rect x="1823" y="264.0" width="6" height="2" fill="#6a9955"/><rect x="1830" y="264.0" width="2" height="2" fill="#6a9955"/><rect x="1833" y="264.0" width="7" height="2" fill="#6a9955"/><rect x="1841" y="264.0" width="2" height="2" fill="#6a9955"/><rect x="1793" y="266.0" width="2" height="2" fill="#6a9955"/><rect x="1796" y="266.0" width="45" height="2" fill="#6a9955"/><rect x="1793" y="268.0" width="11" height="2" fill="#569cd6"/><rect x="1804" y="268.0" width="1" height="2" fill="#777"/><rect x="1806" y="268.0" width="10" height="2" fill="#ce9178"/><rect x="1793" y="270.0" width="11" height="2" fill="#569cd6"/><rect x="1804" y="270.0" width="1" height="2" fill="#777"/><rect x="1806" y="270.0" width="8" height="2" fill="#ce9178"/><rect x="1793" y="272.0" width="2" height="2" fill="#6a9955"/><rect x="1796" y="272.0" width="14" height="2" fill="#6a9955"/><rect x="1811" y="272.0" width="8" height="2" fill="#6a9955"/><rect x="1820" y="272.0" width="8" height="2" fill="#6a9955"/><rect x="1829" y="272.0" width="7" height="2" fill="#6a9955"/><rect x="1837" y="272.0" width="7" height="2" fill="#6a9955"/><rect x="1793" y="274.0" width="14" height="2" fill="#569cd6"/><rect x="1807" y="274.0" width="1" height="2" fill="#777"/><rect x="1809" y="274.0" width="7" height="2" fill="#ce9178"/><rect x="1793" y="278.0" width="1" height="2" fill="#6a9955"/><rect x="1795" y="278.0" width="10" height="2" fill="#6a9955"/><rect x="1793" y="280.0" width="2" height="2" fill="#6a9955"/><rect x="1796" y="280.0" width="3" height="2" fill="#6a9955"/><rect x="1800" y="280.0" width="8" height="2" fill="#6a9955"/><rect x="1809" y="280.0" width="2" height="2" fill="#6a9955"/><rect x="1812" y="280.0" width="1" height="2" fill="#6a9955"/><rect x="1814" y="280.0" width="2" height="2" fill="#6a9955"/><rect x="1817" y="280.0" width="7" height="2" fill="#6a9955"/><rect x="1825" y="280.0" width="10" height="2" fill="#6a9955"/><rect x="1793" y="282.0" width="8" height="2" fill="#569cd6"/><rect x="1801" y="282.0" width="1" height="2" fill="#777"/><rect x="1803" y="282.0" width="2" height="2" fill="#b5cea8"/><rect x="1793" y="284.0" width="14" height="2" fill="#569cd6"/><rect x="1807" y="284.0" width="1" height="2" fill="#777"/><rect x="1809" y="284.0" width="4" height="2" fill="#ce9178"/><rect x="1793" y="288.0" width="1" height="2" fill="#6a9955"/><rect x="1795" y="288.0" width="7" height="2" fill="#6a9955"/><rect x="1803" y="288.0" width="1" height="2" fill="#6a9955"/><rect x="1805" y="288.0" width="7" height="2" fill="#6a9955"/><rect x="1813" y="288.0" width="7" height="2" fill="#6a9955"/><rect x="1793" y="290.0" width="2" height="2" fill="#6a9955"/><rect x="1796" y="290.0" width="17" height="2" fill="#6a9955"/><rect x="1814" y="290.0" width="7" height="2" fill="#6a9955"/><rect x="1822" y="290.0" width="4" height="2" fill="#6a9955"/><rect x="1827" y="290.0" width="5" height="2" fill="#6a9955"/><rect x="1833" y="290.0" width="2" height="2" fill="#6a9955"/><rect x="1836" y="290.0" width="3" height="2" fill="#6a9955"/><rect x="1840" y="290.0" width="9" height="2" fill="#6a9955"/><rect x="1850" y="290.0" width="6" height="2" fill="#6a9955"/><rect x="1793" y="292.0" width="7" height="2" fill="#569cd6"/><rect x="1800" y="292.0" width="1" height="2" fill="#777"/><rect x="1793" y="294.0" width="7" height="2" fill="#569cd6"/><rect x="1800" y="294.0" width="1" height="2" fill="#777"/><rect x="1793" y="296.0" width="6" height="2" fill="#569cd6"/><rect x="1799" y="296.0" width="1" height="2" fill="#777"/><rect x="1793" y="300.0" width="1" height="2" fill="#6a9955"/><rect x="1795" y="300.0" width="10" height="2" fill="#6a9955"/><rect x="1793" y="302.0" width="2" height="2" fill="#6a9955"/><rect x="1796" y="302.0" width="8" height="2" fill="#6a9955"/><rect x="1805" y="302.0" width="24" height="2" fill="#6a9955"/><rect x="1793" y="304.0" width="2" height="2" fill="#6a9955"/><rect x="1796" y="304.0" width="7" height="2" fill="#6a9955"/><rect x="1804" y="304.0" width="23" height="2" fill="#6a9955"/><rect x="1793" y="306.0" width="5" height="2" fill="#569cd6"/><rect x="1798" y="306.0" width="1" height="2" fill="#777"/><rect x="1800" y="306.0" width="17" height="2" fill="#ce9178"/><rect x="1793" y="310.0" width="1" height="2" fill="#6a9955"/><rect x="1795" y="310.0" width="10" height="2" fill="#6a9955"/><rect x="1793" y="312.0" width="2" height="2" fill="#6a9955"/><rect x="1796" y="312.0" width="5" height="2" fill="#6a9955"/><rect x="1802" y="312.0" width="43" height="2" fill="#6a9955"/><rect x="1793" y="314.0" width="6" height="2" fill="#569cd6"/><rect x="1799" y="314.0" width="1" height="2" fill="#777"/><rect x="1793" y="316.0" width="1" height="2" fill="#777"/><rect x="1795" y="316.0" width="4" height="2" fill="#569cd6"/><rect x="1799" y="316.0" width="1" height="2" fill="#777"/><rect x="1801" y="316.0" width="3" height="2" fill="#ce9178"/><rect x="1795" y="318.0" width="4" height="2" fill="#569cd6"/><rect x="1799" y="318.0" width="1" height="2" fill="#777"/><rect x="1801" y="318.0" width="50" height="2" fill="#ce9178"/><rect x="1795" y="320.0" width="6" height="2" fill="#569cd6"/><rect x="1801" y="320.0" width="1" height="2" fill="#777"/><rect x="1803" y="320.0" width="4" height="2" fill="#ce9178"/><rect x="1793" y="322.0" width="1" height="2" fill="#777"/><rect x="1795" y="322.0" width="4" height="2" fill="#569cd6"/><rect x="1799" y="322.0" width="1" height="2" fill="#777"/><rect x="1801" y="322.0" width="3" height="2" fill="#ce9178"/><rect x="1795" y="324.0" width="4" height="2" fill="#569cd6"/><rect x="1799" y="324.0" width="1" height="2" fill="#777"/><rect x="1801" y="324.0" width="37" height="2" fill="#ce9178"/><rect x="1795" y="326.0" width="6" height="2" fill="#569cd6"/><rect x="1801" y="326.0" width="1" height="2" fill="#777"/><rect x="1803" y="326.0" width="6" height="2" fill="#ce9178"/><rect x="1795" y="330.0" width="1" height="2" fill="#6a9955"/><rect x="1797" y="330.0" width="4" height="2" fill="#6a9955"/><rect x="1795" y="332.0" width="6" height="2" fill="#569cd6"/><rect x="1801" y="332.0" width="1" height="2" fill="#777"/><rect x="1795" y="334.0" width="4" height="2" fill="#569cd6"/><rect x="1799" y="334.0" width="1" height="2" fill="#777"/><rect x="1801" y="334.0" width="10" height="2" fill="#ce9178"/><rect x="1795" y="336.0" width="5" height="2" fill="#569cd6"/><rect x="1800" y="336.0" width="1" height="2" fill="#777"/><rect x="1802" y="336.0" width="4" height="2" fill="#ce9178"/><rect x="1795" y="340.0" width="1" height="2" fill="#6a9955"/><rect x="1797" y="340.0" width="7" height="2" fill="#6a9955"/><rect x="1795" y="342.0" width="16" height="2" fill="#569cd6"/><rect x="1811" y="342.0" width="1" height="2" fill="#777"/><rect x="1795" y="344.0" width="6" height="2" fill="#569cd6"/><rect x="1801" y="344.0" width="1" height="2" fill="#777"/><rect x="1803" y="344.0" width="4" height="2" fill="#569cd6"/><rect x="1795" y="346.0" width="9" height="2" fill="#569cd6"/><rect x="1804" y="346.0" width="1" height="2" fill="#777"/><rect x="1806" y="346.0" width="3" height="2" fill="#ce9178"/><rect x="1810" y="346.0" width="1" height="2" fill="#6a9955"/><rect x="1812" y="346.0" width="8" height="2" fill="#6a9955"/><rect x="1821" y="346.0" width="3" height="2" fill="#6a9955"/><rect x="1795" y="350.0" width="1" height="2" fill="#6a9955"/><rect x="1797" y="350.0" width="12" height="2" fill="#6a9955"/><rect x="1795" y="352.0" width="13" height="2" fill="#6a9955"/><rect x="1795" y="354.0" width="8" height="2" fill="#6a9955"/><rect x="1804" y="354.0" width="4" height="2" fill="#6a9955"/><rect x="1795" y="356.0" width="11" height="2" fill="#6a9955"/><rect x="1807" y="356.0" width="5" height="2" fill="#6a9955"/><rect x="1813" y="356.0" width="5" height="2" fill="#6a9955"/><rect x="1795" y="358.0" width="8" height="2" fill="#6a9955"/><rect x="1804" y="358.0" width="4" height="2" fill="#6a9955"/><rect x="1795" y="360.0" width="7" height="2" fill="#6a9955"/><rect x="1795" y="362.0" width="13" height="2" fill="#6a9955"/><rect x="1795" y="366.0" width="1" height="2" fill="#6a9955"/><rect x="1797" y="366.0" width="11" height="2" fill="#6a9955"/><rect x="1794" y="368.0" width="4" height="2" fill="#569cd6"/><rect x="1798" y="368.0" width="1" height="2" fill="#777"/><rect x="1795" y="370.0" width="6" height="2" fill="#6a9955"/><rect x="1802" y="370.0" width="4" height="2" fill="#6a9955"/><rect x="1795" y="372.0" width="6" height="2" fill="#6a9955"/><rect x="1802" y="372.0" width="8" height="2" fill="#6a9955"/><rect x="1795" y="374.0" width="7" height="2" fill="#6a9955"/><rect x="1803" y="374.0" width="2" height="2" fill="#6a9955"/><rect x="1795" y="376.0" width="5" height="2" fill="#6a9955"/><rect x="1795" y="378.0" width="9" height="2" fill="#6a9955"/><rect x="1795" y="380.0" width="15" height="2" fill="#6a9955"/><rect x="1811" y="380.0" width="3" height="2" fill="#6a9955"/><rect x="1795" y="382.0" width="21" height="2" fill="#6a9955"/><rect x="1817" y="382.0" width="1" height="2" fill="#6a9955"/><rect x="1819" y="382.0" width="1" height="2" fill="#6a9955"/><rect x="1795" y="384.0" width="10" height="2" fill="#6a9955"/><rect x="1806" y="384.0" width="5" height="2" fill="#6a9955"/></g></svg>
<div class="abs" style="left:1904px;top:108px;width:1px;height:896px;background:#3c3c3c"></div>
<div class="abs" style="left:1905px;top:108px;width:15px;height:1px;background:#2f2f2f"></div>
<div class="abs" style="left:1905px;top:528px;width:15px;height:192px;background:rgba(121,121,121,0.4)"></div>
<div class="abs" style="left:1905px;top:702px;width:15px;height:2px;background:rgba(160,160,160,0.8)"></div>
<div id="status"></div>
<svg class="abs" style="left:0;top:1004px" width="1920" height="25" fill="none" stroke="#ffffff" stroke-width="1.5">
  <circle cx="26.6" cy="13" r="6.6"/>
  <path d="M23.4 9.8 L29.8 16.2 M29.8 9.8 L23.4 16.2"/>
  <path d="M60.4 5.6 L67.4 18.8 H53.4 Z" stroke-linejoin="round"/>
  <path d="M60.4 10.5 V14.6 M60.4 16 V17" stroke-width="1"/>
</svg>
<div class="st" style="left:39.5px">0</div>
<div class="st" style="left:72.5px">0</div>
<div class="st" style="left:1503px;font-size:15px;font-weight:300">行</div>
<div class="st" style="left:1522.3px;">118</div>
<div class="st" style="left:1545px;font-size:15px">，</div>
<div class="st" style="left:1560px;font-size:15px;font-weight:300">列</div>
<div class="st" style="left:1579px;">20</div>
<div class="st" style="left:1615px;font-size:14.5px;font-weight:300">空格</div>
<div class="st" style="left:1644.5px;">:</div>
<div class="st" style="left:1652px;">2</div>
<div class="st" style="left:1680px;letter-spacing:-0.5px">UTF-8</div>
<div class="st" style="left:1738.5px;font-size:14.2px;letter-spacing:-0.9px">CRLF</div>
<div class="st" style="left:1791.3px;letter-spacing:-0.5px">YAML</div>
<svg class="abs" style="left:1840px;top:1004px" width="80" height="25" fill="none" stroke="#ffffff" stroke-width="1.4">
  <path d="M13.3 10.6 V6.5 H24.6 V14 H21 L19.5 15.5"/>
  <circle cx="14.5" cy="13" r="2.4"/>
  <path d="M9.6 20.6 C10 17 12 15.6 14.5 15.6 C17 15.6 19 17 19.4 20.6"/>
  <path d="M48.6 17.6 V11.6 C48.6 8.3 50.8 6.3 53.9 6.3 C57 6.3 59.2 8.3 59.2 11.6 V17.6 L60.3 18.6 H47.5 Z M52.6 19.4 C52.8 20.6 55 20.6 55.2 19.4"/>
</svg>
</body></html>
